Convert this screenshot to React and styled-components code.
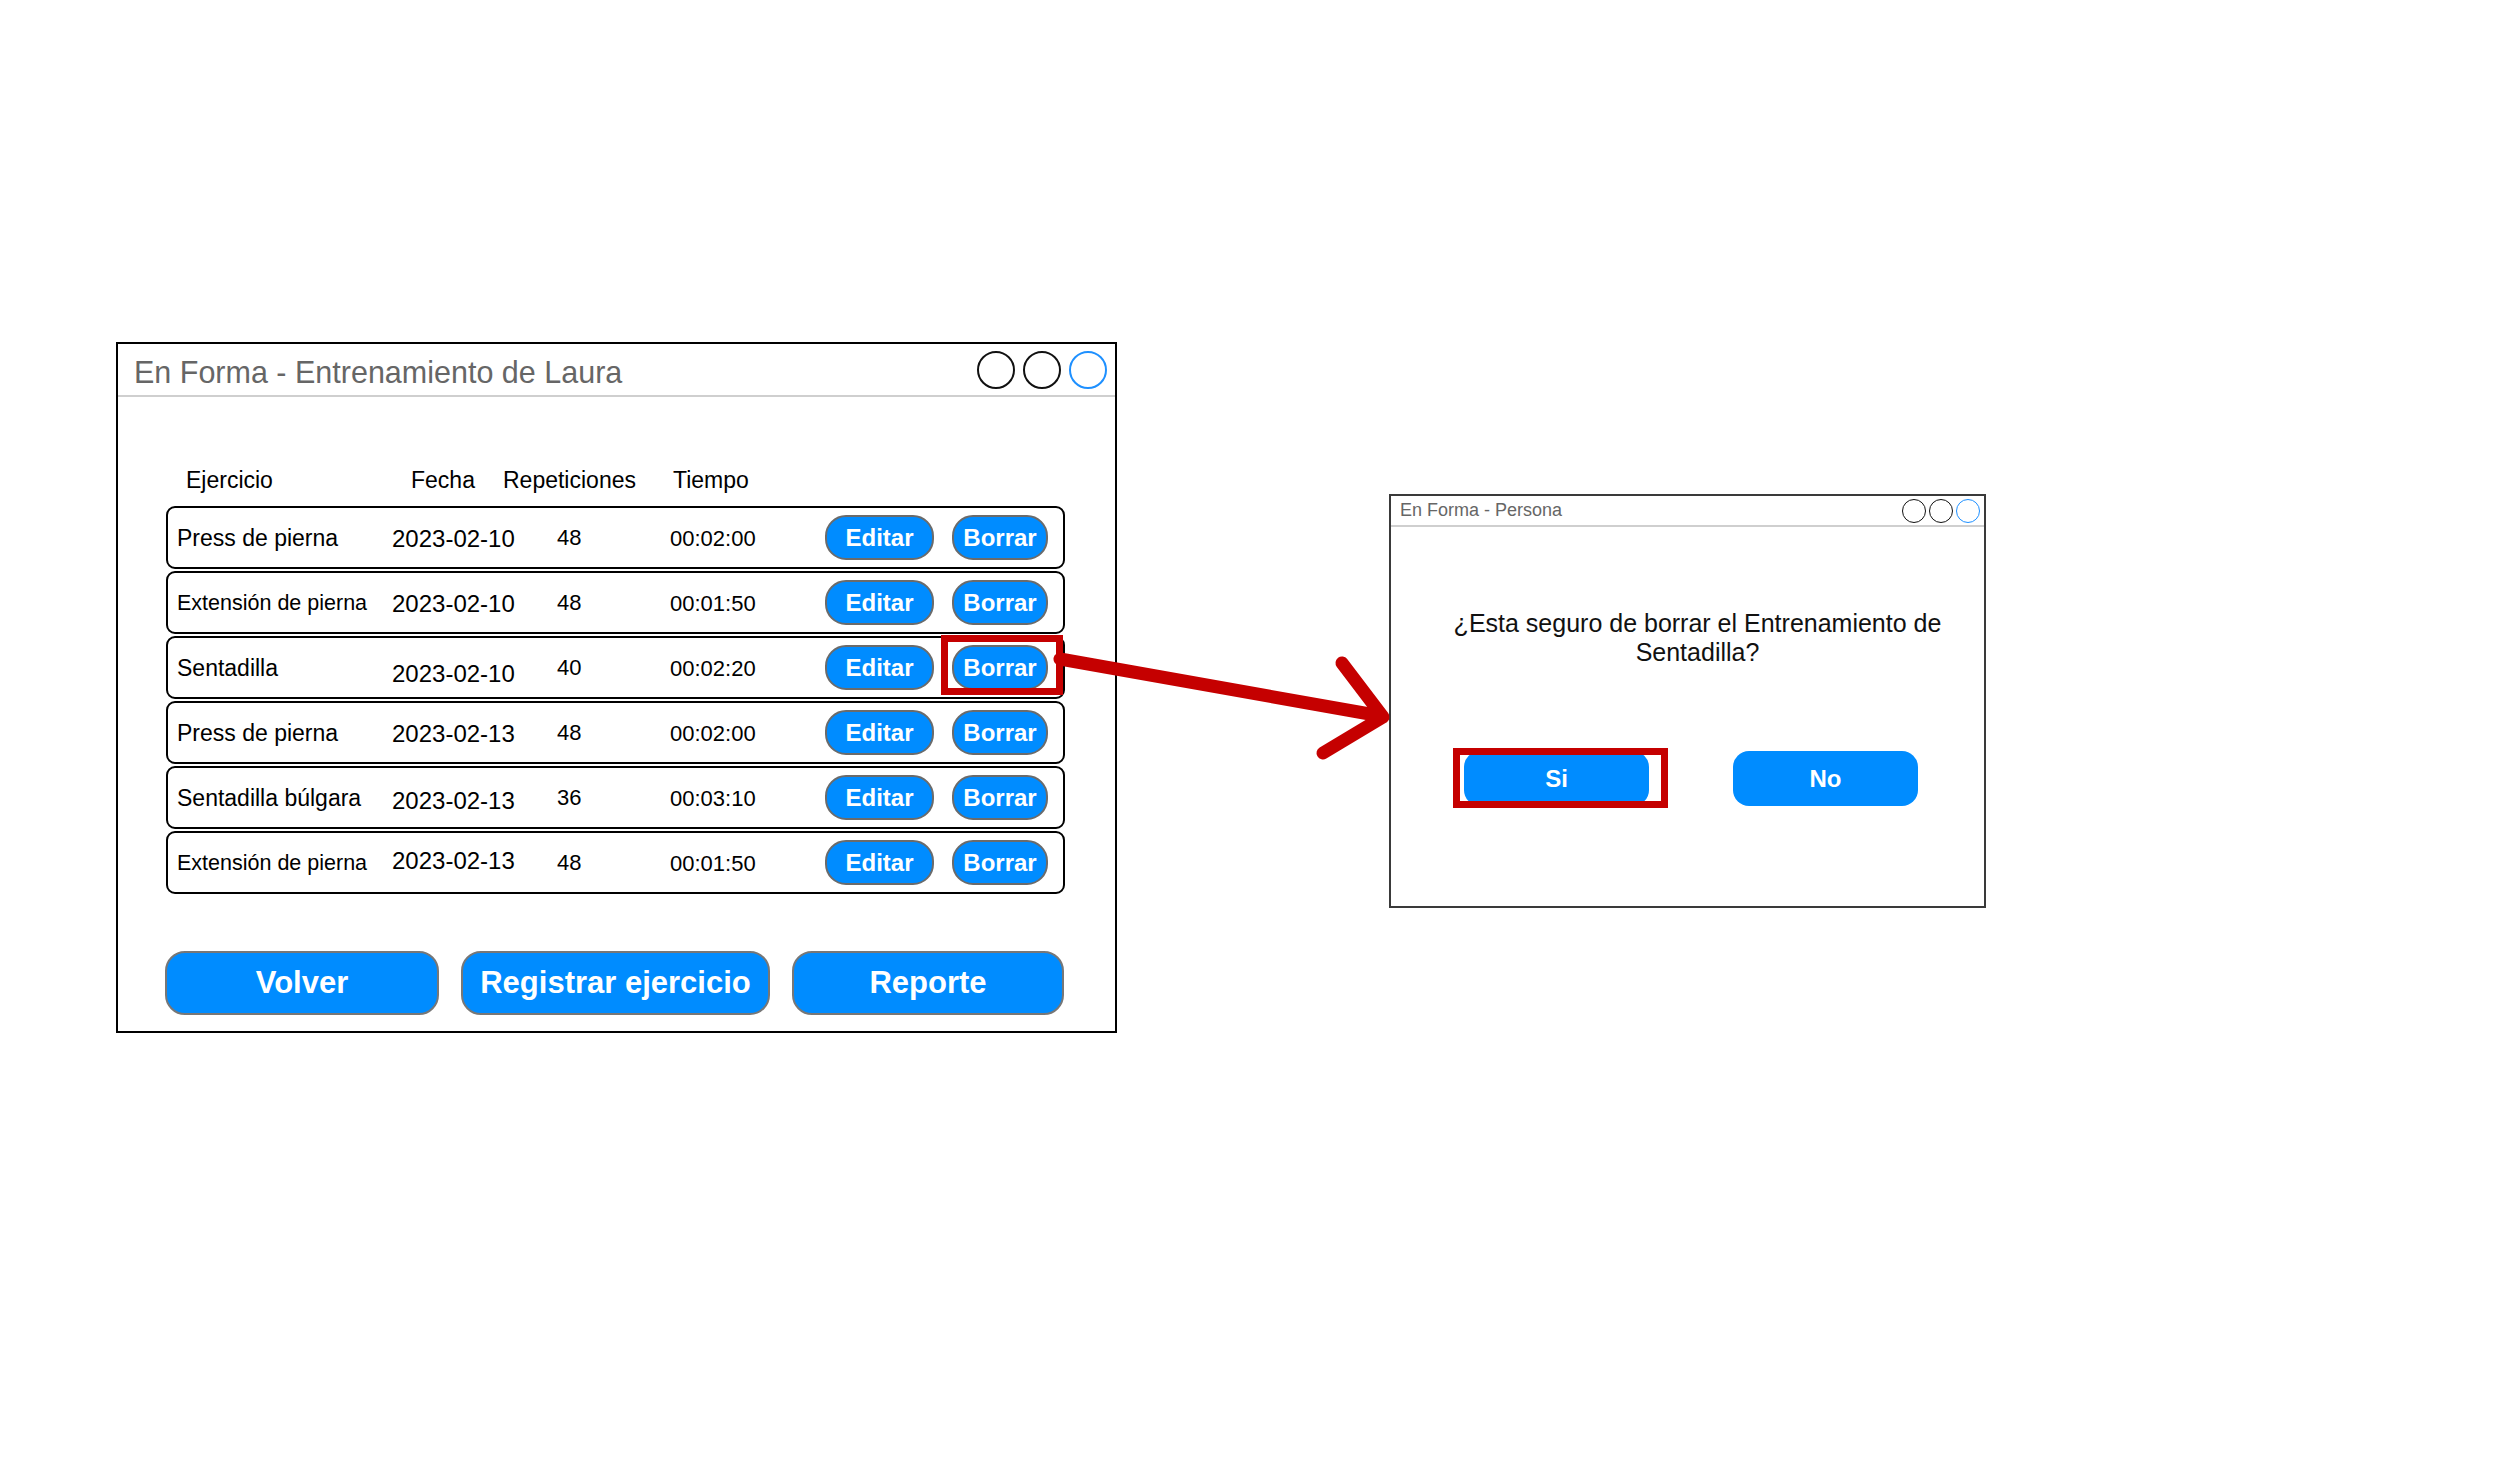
import React from 'react';
import styled, { createGlobalStyle } from 'styled-components';

const GlobalStyle = createGlobalStyle`
  html, body { margin: 0; padding: 0; background: #fff; }
  body { font-family: "Liberation Sans", Arial, Helvetica, sans-serif; color: #000; }
  * { box-sizing: border-box; }
`;

const BLUE = '#008cff';
const RED = '#c50000';

const Canvas = styled.div`
  position: relative;
  width: 2496px;
  height: 1478px;
  display: flex;
  align-items: flex-start;
  padding: 342px 0 0 116px;
  overflow: hidden;
`;

const Window = styled.section`
  width: ${(p) => p.$w}px;
  height: ${(p) => p.$h}px;
  margin-left: ${(p) => p.$ml || 0}px;
  margin-top: ${(p) => p.$mt || 0}px;
  border: 2px solid ${(p) => p.$border};
  background: #fff;
  display: flex;
  flex-direction: column;
`;

const TitleBar = styled.header`
  height: ${(p) => p.$h}px;
  flex: none;
  display: flex;
  align-items: center;
  justify-content: space-between;
  padding: 0 ${(p) => p.$pr}px 0 ${(p) => p.$pl}px;
  border-bottom: 2px solid #cfcfcf;
`;

const TitleText = styled.span`
  font-size: ${(p) => p.$size}px;
  color: #666;
  white-space: nowrap;
  transform: translateY(${(p) => p.$dy || 0}px);
`;

const Controls = styled.div`
  display: flex;
  gap: ${(p) => p.$gap}px;
`;

const Dot = styled.span`
  width: ${(p) => p.$d}px;
  height: ${(p) => p.$d}px;
  border-radius: 50%;
  border: ${(p) => p.$bw}px solid ${(p) => (p.$blue ? '#1e90ff' : '#111')};
`;

const MainBody = styled.div`
  flex: 1;
  display: flex;
  flex-direction: column;
  padding: 70px 50px 0 48px;
`;

const HeaderRow = styled.div`
  display: flex;
  height: 26px;
  align-items: center;
  padding-left: 20px;
  margin-bottom: 13px;
  font-size: 23px;
`;

const HeaderCell = styled.span`
  width: ${(p) => (p.$w ? `${p.$w}px` : 'auto')};
  white-space: nowrap;
`;

const RowList = styled.div`
  display: flex;
  flex-direction: column;
  gap: 2px;
`;

const Row = styled.div`
  height: 63px;
  border: 2px solid #000;
  border-radius: 9px;
  display: grid;
  grid-template-columns: 215px 165px 113px 155px 127px 96px;
  align-items: center;
  padding-left: 9px;
`;

const Cell = styled.span`
  font-size: ${(p) => p.$size}px;
  white-space: nowrap;
  transform: translateY(${(p) => p.$dy || 0}px);
`;

const SmallButton = styled.button`
  width: ${(p) => p.$w}px;
  height: 45px;
  border: 2px solid #6b6b6b;
  border-radius: 21px;
  background: ${BLUE};
  color: #fff;
  font-family: inherit;
  font-weight: bold;
  font-size: 24px;
  padding: 0;
  display: flex;
  align-items: center;
  justify-content: center;
`;

const Highlight = styled.span`
  position: relative;
  display: inline-flex;
  &::after {
    content: '';
    position: absolute;
    top: ${(p) => p.$t}px;
    bottom: ${(p) => p.$b}px;
    left: ${(p) => p.$l}px;
    right: ${(p) => p.$r}px;
    border: 7px solid ${RED};
    pointer-events: none;
  }
`;

const ActionBar = styled.div`
  display: flex;
  gap: 22px;
  margin-top: 57px;
  margin-left: -1px;
`;

const BigButton = styled.button`
  width: ${(p) => p.$w}px;
  height: 64px;
  border: 2px solid #777;
  border-radius: 20px;
  background: ${BLUE};
  color: #fff;
  font-family: inherit;
  font-weight: bold;
  font-size: 31px;
  padding: 0;
`;

const DialogBody = styled.div`
  flex: 1;
  display: flex;
  flex-direction: column;
`;

const Message = styled.p`
  margin: 82px 0 0 0;
  padding-left: 20px;
  text-align: center;
  font-size: 25px;
  line-height: 29px;
  color: #111;
`;

const DialogActions = styled.div`
  display: flex;
  gap: 84px;
  padding-left: 73px;
  margin-top: 84px;
`;

const DialogButton = styled.button`
  width: 185px;
  height: 55px;
  border: none;
  border-radius: 16px;
  background: ${BLUE};
  color: #fff;
  font-family: inherit;
  font-weight: bold;
  font-size: 24px;
  padding: 0;
`;

const ArrowLayer = styled.svg`
  position: absolute;
  top: 0;
  left: 0;
  pointer-events: none;
`;

const rows = [
  { name: 'Press de pierna', date: '2023-02-10', reps: '48', time: '00:02:00' },
  { name: 'Extensión de pierna', small: true, date: '2023-02-10', reps: '48', time: '00:01:50' },
  { name: 'Sentadilla', date: '2023-02-10', dateDy: 5, reps: '40', time: '00:02:20', highlight: true },
  { name: 'Press de pierna', date: '2023-02-13', reps: '48', time: '00:02:00' },
  { name: 'Sentadilla búlgara', date: '2023-02-13', dateDy: 2, reps: '36', time: '00:03:10' },
  { name: 'Extensión de pierna', small: true, date: '2023-02-13', dateDy: -3, reps: '48', time: '00:01:50' },
];

function WindowControls({ d, gap, bw }) {
  return (
    <Controls $gap={gap}>
      <Dot $d={d} $bw={bw} />
      <Dot $d={d} $bw={bw} />
      <Dot $d={d} $bw={bw} $blue />
    </Controls>
  );
}

export default function App() {
  return (
    <>
      <GlobalStyle />
      <Canvas>
        <Window $w={1001} $h={691} $border="#000">
          <TitleBar $h={53} $pl={16} $pr={8}>
            <TitleText $size={30.5} $dy={3}>En Forma - Entrenamiento de Laura</TitleText>
            <WindowControls d={38} gap={8} bw={2} />
          </TitleBar>
          <MainBody>
            <HeaderRow>
              <HeaderCell $w={225}>Ejercicio</HeaderCell>
              <HeaderCell $w={92}>Fecha</HeaderCell>
              <HeaderCell $w={170}>Repeticiones</HeaderCell>
              <HeaderCell>Tiempo</HeaderCell>
            </HeaderRow>
            <RowList>
              {rows.map((r, i) => (
                <Row key={i}>
                  <Cell $size={r.small ? 21.5 : 23} $dy={1}>{r.name}</Cell>
                  <Cell $size={24} $dy={(r.dateDy || 0) + 1}>{r.date}</Cell>
                  <Cell $size={22}>{r.reps}</Cell>
                  <Cell $size={22} $dy={1}>{r.time}</Cell>
                  <SmallButton $w={109}>Editar</SmallButton>
                  {r.highlight ? (
                    <Highlight $t={-10} $b={-5} $l={-11} $r={-15}>
                      <SmallButton $w={96}>Borrar</SmallButton>
                    </Highlight>
                  ) : (
                    <SmallButton $w={96}>Borrar</SmallButton>
                  )}
                </Row>
              ))}
            </RowList>
            <ActionBar>
              <BigButton $w={274}>Volver</BigButton>
              <BigButton $w={309}>Registrar ejercicio</BigButton>
              <BigButton $w={272}>Reporte</BigButton>
            </ActionBar>
          </MainBody>
        </Window>

        <Window $w={597} $h={414} $border="#3a3a3a" $ml={272} $mt={152}>
          <TitleBar $h={31} $pl={9} $pr={4}>
            <TitleText $size={18}>En Forma - Persona</TitleText>
            <WindowControls d={24} gap={3} bw={1.5} />
          </TitleBar>
          <DialogBody>
            <Message>
              ¿Esta seguro de borrar el Entrenamiento de
              <br />
              Sentadilla?
            </Message>
            <DialogActions>
              <Highlight $t={-3} $b={-2} $l={-11} $r={-19}>
                <DialogButton>Si</DialogButton>
              </Highlight>
              <DialogButton>No</DialogButton>
            </DialogActions>
          </DialogBody>
        </Window>

        <ArrowLayer width="2496" height="1478" viewBox="0 0 2496 1478">
          <g fill="none" stroke={RED} strokeWidth="13" strokeLinecap="round" strokeLinejoin="round">
            <path d="M1060 659 L1381 716" />
            <path d="M1342 663 L1383 717 L1323 753" />
          </g>
        </ArrowLayer>
      </Canvas>
    </>
  );
}
